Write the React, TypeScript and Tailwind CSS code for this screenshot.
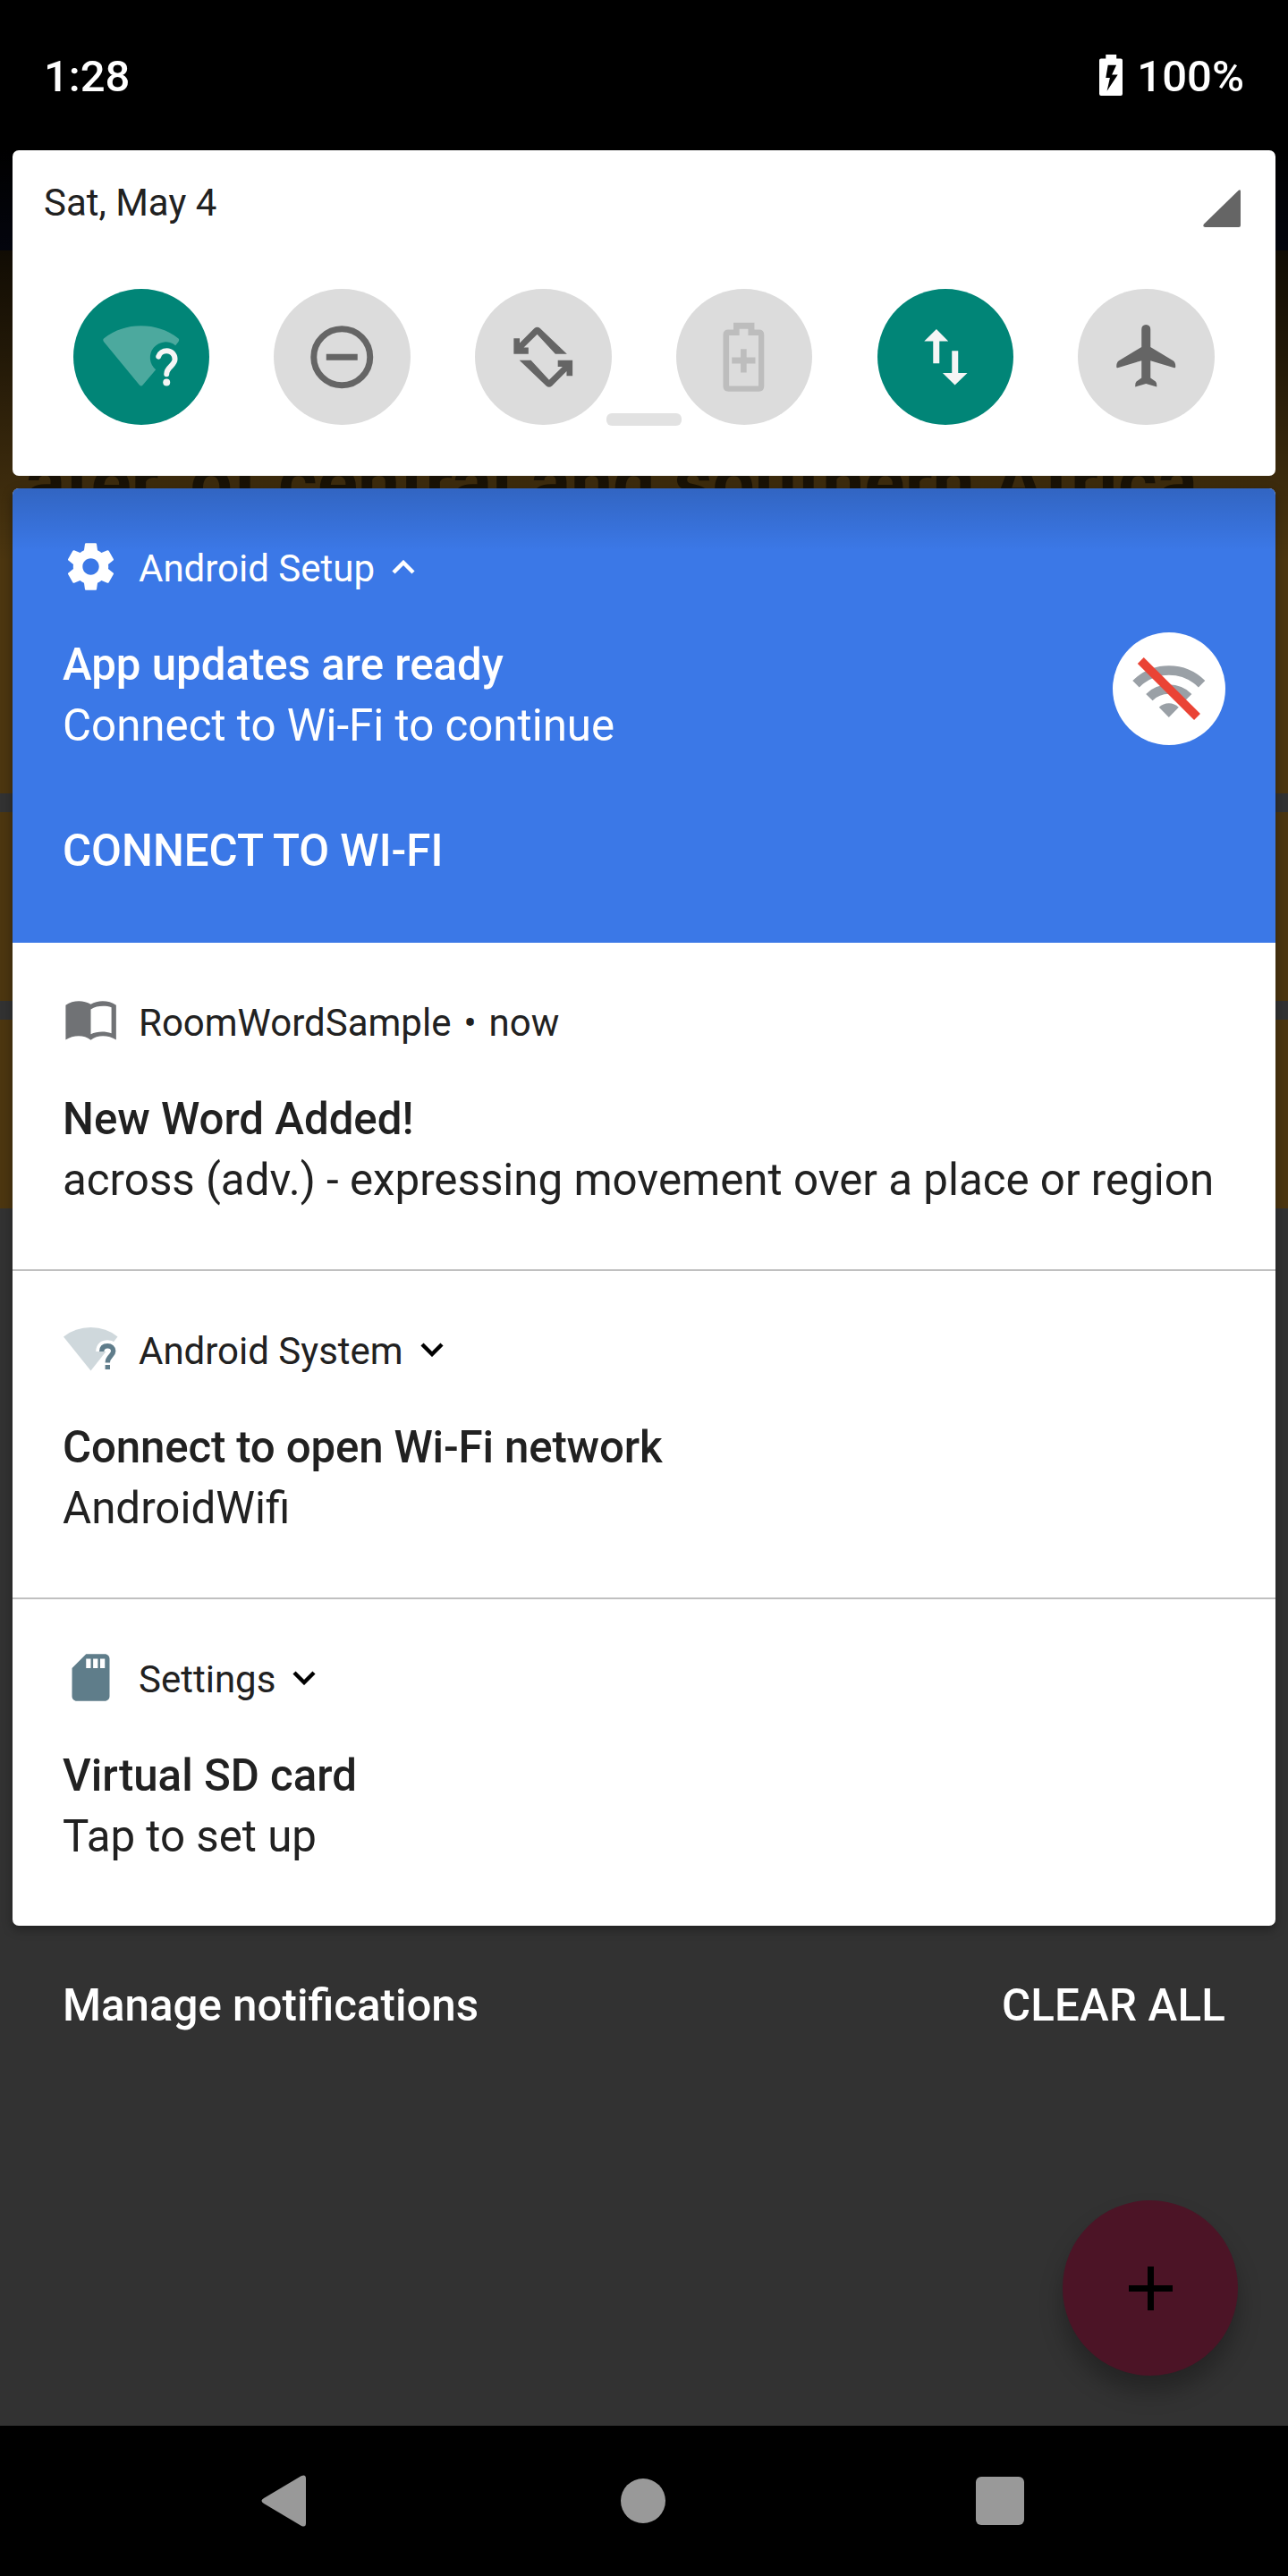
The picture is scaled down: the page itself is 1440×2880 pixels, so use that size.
import type { ReactNode } from "react";

const FONT = "font-[Roboto,'Noto_Sans',sans-serif]";

function Tile({ on = false, viewBox, children }: { on?: boolean; viewBox: string; children: ReactNode }) {
  return (
    <div className={`flex size-[152.5px] items-center justify-center rounded-full ${on ? "bg-[#018577]" : "bg-[#dcdcdc]"}`}>
      <svg viewBox={viewBox} className="size-full">
        {children}
      </svg>
    </div>
  );
}

// 84px glyph on a 24-unit grid, centred in the tile
const GRID = "-9.8 -9.8 43.6 43.6";

function QuickSettings() {
  const rotate =
    "M19.6 11H15.9L10.1 4.7L5.8 8.9H7.3V11H2.6V6H4.5V7.5L9.2 2.8Q10.1 2.1 11 2.8Z";
  return (
    <section className="relative mx-[14px] h-[364px] rounded-[7px] bg-white">
      <div className="flex h-[152px] items-start justify-between pr-[39px] pl-[35px]">
        <span className="pt-[31px] text-[42px] leading-[56px] text-[#212121]">Sat, May 4</span>
        <svg viewBox="0 0 42 42" className="mt-[44px] size-[42px]">
          <path d="M2.5 42H40Q42 42 42 40V2Q42 -1 39.5 1L1 38.5Q-1 42 2.5 42Z" fill="#656565" />
        </svg>
      </div>
      <div className="flex justify-between pt-[2.5px] pr-[68px] pl-[67.5px]">
        <Tile on viewBox="65 68 458 458">
          <path
            d="M287 391L167 245Q162 238 169 233Q223 192 292 192Q362 192 416 233Q423 238 418 245L408 258A52 52 0 1 0 342 339L298 391Q293 397 287 391Z"
            fill="#4ca99e"
          />
          <path
            d="M351 295C354 283 366 276 379 276C394 276 406 288 406 304C406 326 378 330 378 354"
            fill="none"
            stroke="#f5f5f5"
            strokeWidth="18"
            strokeLinecap="round"
          />
          <circle cx="378" cy="382" r="12" fill="#f5f5f5" />
        </Tile>
        <Tile viewBox={GRID}>
          <circle cx="12" cy="12" r="9" fill="none" stroke="#656565" strokeWidth="2" />
          <rect x="7" y="11" width="10" height="2" fill="#656565" />
        </Tile>
        <Tile viewBox={GRID}>
          <path d={rotate} fill="#656565" />
          <path d={rotate} fill="#656565" transform="rotate(180 12 12)" />
        </Tile>
        <Tile viewBox={GRID}>
          <path
            fill="#bdbdbd"
            fillRule="evenodd"
            d="M8.5 1H15.2V3.2H16.6Q18.3 3.2 18.3 4.9V21.3Q18.3 23 16.6 23H6.9Q5.2 23 5.2 21.3V4.9Q5.2 3.2 6.9 3.2H8.5ZM10.4 3V5.1H7.1V21.2H16.5V5.1H13.2V3ZM10.8 9.4H12.7V12.1H15.5V14.1H12.7V16.9H10.8V14.1H8V12.1H10.8Z"
          />
        </Tile>
        <Tile on viewBox="62 68 458 458">
          <path d="M260 203L300 244H270V318H249V244H219Z" fill="#f5f5f5" />
          <path d="M322 391L281 350H312V276H333V350H364Z" fill="#f5f5f5" />
        </Tile>
        <Tile viewBox="737 68 458 458">
          <path
            fill="#656565"
            d="M966 188Q981 189 981 204V263L1057 309Q1066 315 1065 330Q1065 334 1061 333L981 309V367L998 379Q1003 383 1002 397L966 386L930 397Q929 383 934 379L951 367V309L871 333Q867 334 867 330Q866 315 875 309L951 263V204Q951 189 966 188Z"
          />
        </Tile>
      </div>
      <div className="absolute top-[294px] left-[664px] h-[14px] w-[84px] rounded-[6px] bg-[#e2e2e2]" />
    </section>
  );
}

function Chevron({ up = false, color }: { up?: boolean; color: string }) {
  return (
    <svg viewBox="0 0 26 16" className="ml-[19px] h-[16px] w-[26px]">
      <path d={up ? "M2 14L13 3L24 14" : "M2 2L13 13L24 2"} fill="none" stroke={color} strokeWidth="4.4" />
    </svg>
  );
}

interface NoticeProps {
  icon: ReactNode;
  app: string;
  after?: ReactNode;
  title: string;
  titleClass?: string;
  text: string;
}

function Notice({ icon, app, after, title, titleClass = "", text }: NoticeProps) {
  return (
    <div className="flex flex-col px-[56px] pt-[56px]">
      <div className="flex h-[63px] items-center">
        <div className="size-[63px]">{icon}</div>
        <span className="ml-[22px] pt-[4px] text-[42px] leading-[56px]">{app}</span>
        {after}
      </div>
      <div className={`mt-[44px] text-[49.2px] leading-[68px] font-medium ${titleClass}`}>{title}</div>
      <div className="text-[49.27px] leading-[68px] whitespace-nowrap">{text}</div>
    </div>
  );
}

function WifiOff() {
  return (
    <svg viewBox="0 0 126 126" className="absolute top-[161px] right-[56px] size-[126px]">
      <circle cx="63" cy="63" r="63" fill="#fff" />
      <g fill="none" stroke="#9aa0a6" strokeWidth="10.5">
        <path d="M26 57.7A52 52 0 0 1 99.6 57.7" />
        <path d="M40.9 72.6A31 31 0 0 1 84.7 72.6" />
      </g>
      <path d="M62.8 95L51.8 83.8A15.500 15.500 0 0 1 73.8 83.8Z" fill="#9aa0a6" />
      <path d="M31.3 31.6L94.5 94.4" stroke="#ea4335" strokeWidth="9.8" />
    </svg>
  );
}

function Notifications() {
  return (
    <section className="mx-[14px] mt-[14px] overflow-hidden rounded-[7px] bg-white text-[#212121] shadow-[0_4px_12px_rgba(0,0,0,0.35)]">
      <div className="relative h-[508px] bg-[#3b78e7] text-white">
        <div className="absolute inset-x-0 top-0 h-[70px] bg-gradient-to-b from-black/16 to-transparent" />
        <Notice
          icon={
            <svg viewBox="0 0 24 24" className="size-full" fill="#fff">
              <path d="M19.43 12.98c.04-.32.07-.64.07-.98s-.03-.66-.07-.98l2.11-1.65c.19-.15.24-.42.12-.64l-2-3.46c-.12-.22-.39-.3-.61-.22l-2.49 1c-.52-.4-1.08-.73-1.69-.98l-.38-2.65C14.46 2.18 14.25 2 14 2h-4c-.25 0-.46.18-.49.42l-.38 2.65c-.61.25-1.17.59-1.69.98l-2.49-1c-.23-.09-.49 0-.61.22l-2 3.46c-.13.22-.07.49.12.64l2.11 1.65c-.04.32-.07.65-.07.98s.03.66.07.98l-2.11 1.65c-.19.15-.24.42-.12.64l2 3.46c.12.22.39.3.61.22l2.49-1c.52.4 1.08.73 1.69.98l.38 2.65c.03.24.24.42.49.42h4c.25 0 .46-.18.49-.42l.38-2.65c.61-.25 1.17-.59 1.69-.98l2.49 1c.23.09.49 0 .61-.22l2-3.46c.12-.22.07-.49-.12-.64l-2.11-1.65zM12 15.5c-1.93 0-3.5-1.57-3.5-3.5s1.57-3.5 3.5-3.5 3.5 1.57 3.5 3.5-1.57 3.5-3.5 3.5z" />
            </svg>
          }
          app="Android Setup"
          after={<Chevron up color="#fff" />}
          title="App updates are ready"
          text="Connect to Wi-Fi to continue"
        />
        <div className="mt-[72px] px-[56px] text-[49.2px] leading-[68px] font-medium">CONNECT TO WI-FI</div>
        <WifiOff />
      </div>
      <div className="h-[365px]">
        <Notice
          icon={
            <svg viewBox="0 0 24 24" className="size-full">
              <path
                fill="#707275"
                fillRule="evenodd"
                d="M1.3 5.2C4.5 3 9 3 12 4.9C15 3 19.5 3 22.8 5.2V20C19.5 18 15 17.7 12 20.1C9 17.7 4.5 18 1.3 20ZM12 7V17.6C14.5 16.4 18 16.3 20.8 17.2V6.2C18 5.3 14.5 5.5 12 7Z"
              />
            </svg>
          }
          app="RoomWordSample"
          after={
            <>
              <span className="ml-[14px] pt-[4px] text-[42px] leading-[56px]">•</span>
              <span className="ml-[14px] pt-[4px] text-[42px] leading-[56px]">now</span>
            </>
          }
          title="New Word Added!"
          text="across (adv.) - expressing movement over a place or region"
        />
      </div>
      <div className="h-[2px] bg-[#c0c0c0]" />
      <div className="h-[365px]">
        <Notice
          icon={
            <svg viewBox="0 0 63 63" className="size-full">
              <path d="M31.5 55.5L1 17.5Q14 7 31.5 7Q49 7 61.5 17.5Z" fill="#cfd8dc" />
              <g fill="none">
                <path d="M43.5 34C43.5 29 46.5 27.5 50.3 27.5C54 27.5 57 29.5 57 33.5C57 39 50.3 39 50.3 46.5M50.3 49V54" stroke="#fff" strokeWidth="12.5" />
                <path d="M43.7 34C43.7 29.5 46.5 27.7 50.3 27.7C54 27.7 56.7 29.7 56.7 33.5C56.7 39 50.3 39 50.3 46.5M50.3 49V54" stroke="#607d8b" strokeWidth="5.4" />
              </g>
            </svg>
          }
          app="Android System"
          after={<Chevron color="#000" />}
          title="Connect to open Wi-Fi network"
          titleClass="tracking-[-0.15px]"
          text="AndroidWifi"
        />
      </div>
      <div className="h-[2px] bg-[#c0c0c0]" />
      <div className="h-[365px]">
        <Notice
          icon={
            <svg viewBox="0 0 24 24" className="size-full" fill="#5f7d8a">
              <path d="M18 2h-8L4.02 8 4 20c0 1.100.9 2 2 2h12c1.100 0 2-.9 2-2V4c0-1.100-.9-2-2-2zm-6 6h-2V4h2v4zm3 0h-2V4h2v4zm3 0h-2V4h2v4z" />
            </svg>
          }
          app="Settings"
          after={<Chevron color="#000" />}
          title="Virtual SD card"
          text="Tap to set up"
        />
      </div>
    </section>
  );
}

// Dimmed word list of the app underneath the notification shade
function Backdrop() {
  return (
    <div className="absolute inset-0 flex flex-col overflow-hidden bg-[#323232]">
      <div className="h-[280px] shrink-0 bg-[#10163c]" />
      <div className="h-[607px] shrink-0 overflow-hidden bg-[#4c3610]">
        <div className="mt-[215px] ml-[28px] text-[84px] leading-[90px] font-bold whitespace-nowrap text-[#1f1606]">
          ater, of central and southern Africa
        </div>
      </div>
      <div className="h-[21px] shrink-0" />
      <div className="h-[211px] shrink-0 bg-[#4c3610]" />
      <div className="h-[21px] shrink-0" />
      <div className="h-[211px] shrink-0 bg-[#4c3610]" />
      <div className="absolute inset-x-0 top-[168px] h-[460px] bg-gradient-to-b from-black via-black/55 to-transparent" />
    </div>
  );
}

export default function App() {
  return (
    <div className={`relative flex h-[2880px] w-[1440px] flex-col overflow-hidden ${FONT}`}>
      <Backdrop />
      <header className="relative flex h-[168px] items-start justify-between bg-black pr-[49px] pl-[49px] text-[49px] leading-[60px] font-medium text-white">
        <span className="pt-[56px]">1:28</span>
        <div className="flex items-start">
          <svg viewBox="0 0 26 46" className="mt-[61px] h-[46px] w-[26px]">
            <path
              fill="#fff"
              fillRule="evenodd"
              d="M7.3 0H19.2V4.5H24Q26 4.5 26 6.5V44Q26 46 24 46H2Q0 46 0 44V6.5Q0 4.5 2 4.5H7.3ZM9.7 11.8L7.3 26.1H11.9L8.6 40.8L20.7 22.6H14.1L19.1 11.8Z"
            />
          </svg>
          <span className="ml-[16px] pt-[56px]">100%</span>
        </div>
      </header>
      <div className="relative">
        <QuickSettings />
        <Notifications />
      </div>
      <div className="relative flex justify-between px-[70px] pt-[54px] text-[49.25px] leading-[70px] font-medium text-white">
        <span>Manage notifications</span>
        <span className="tracking-[0.2px]">CLEAR ALL</span>
      </div>
      <div className="absolute top-[2460px] left-[1188px] flex size-[196px] items-center justify-center rounded-full bg-[#4c1426] shadow-[0_18px_26px_rgba(0,0,0,0.28)]">
        <svg viewBox="0 0 49 49" className="size-[49px]">
          <path d="M21 0H28V21H49V28H28V49H21V28H0V21H21Z" />
        </svg>
      </div>
      <nav className="relative mt-auto flex h-[168px] items-center bg-black">
        <svg viewBox="0 0 52 58" className="ml-[291px] h-[58px] w-[52px]">
          <path d="M4 26L46 1Q51 -1 51 4V54Q51 59 46 57L4 32Q-1 29 4 26Z" fill="#999" />
        </svg>
        <div className="ml-[351px] size-[50px] rounded-full bg-[#999]" />
        <div className="ml-[347px] size-[54px] rounded-[6px] bg-[#999]" />
      </nav>
    </div>
  );
}
